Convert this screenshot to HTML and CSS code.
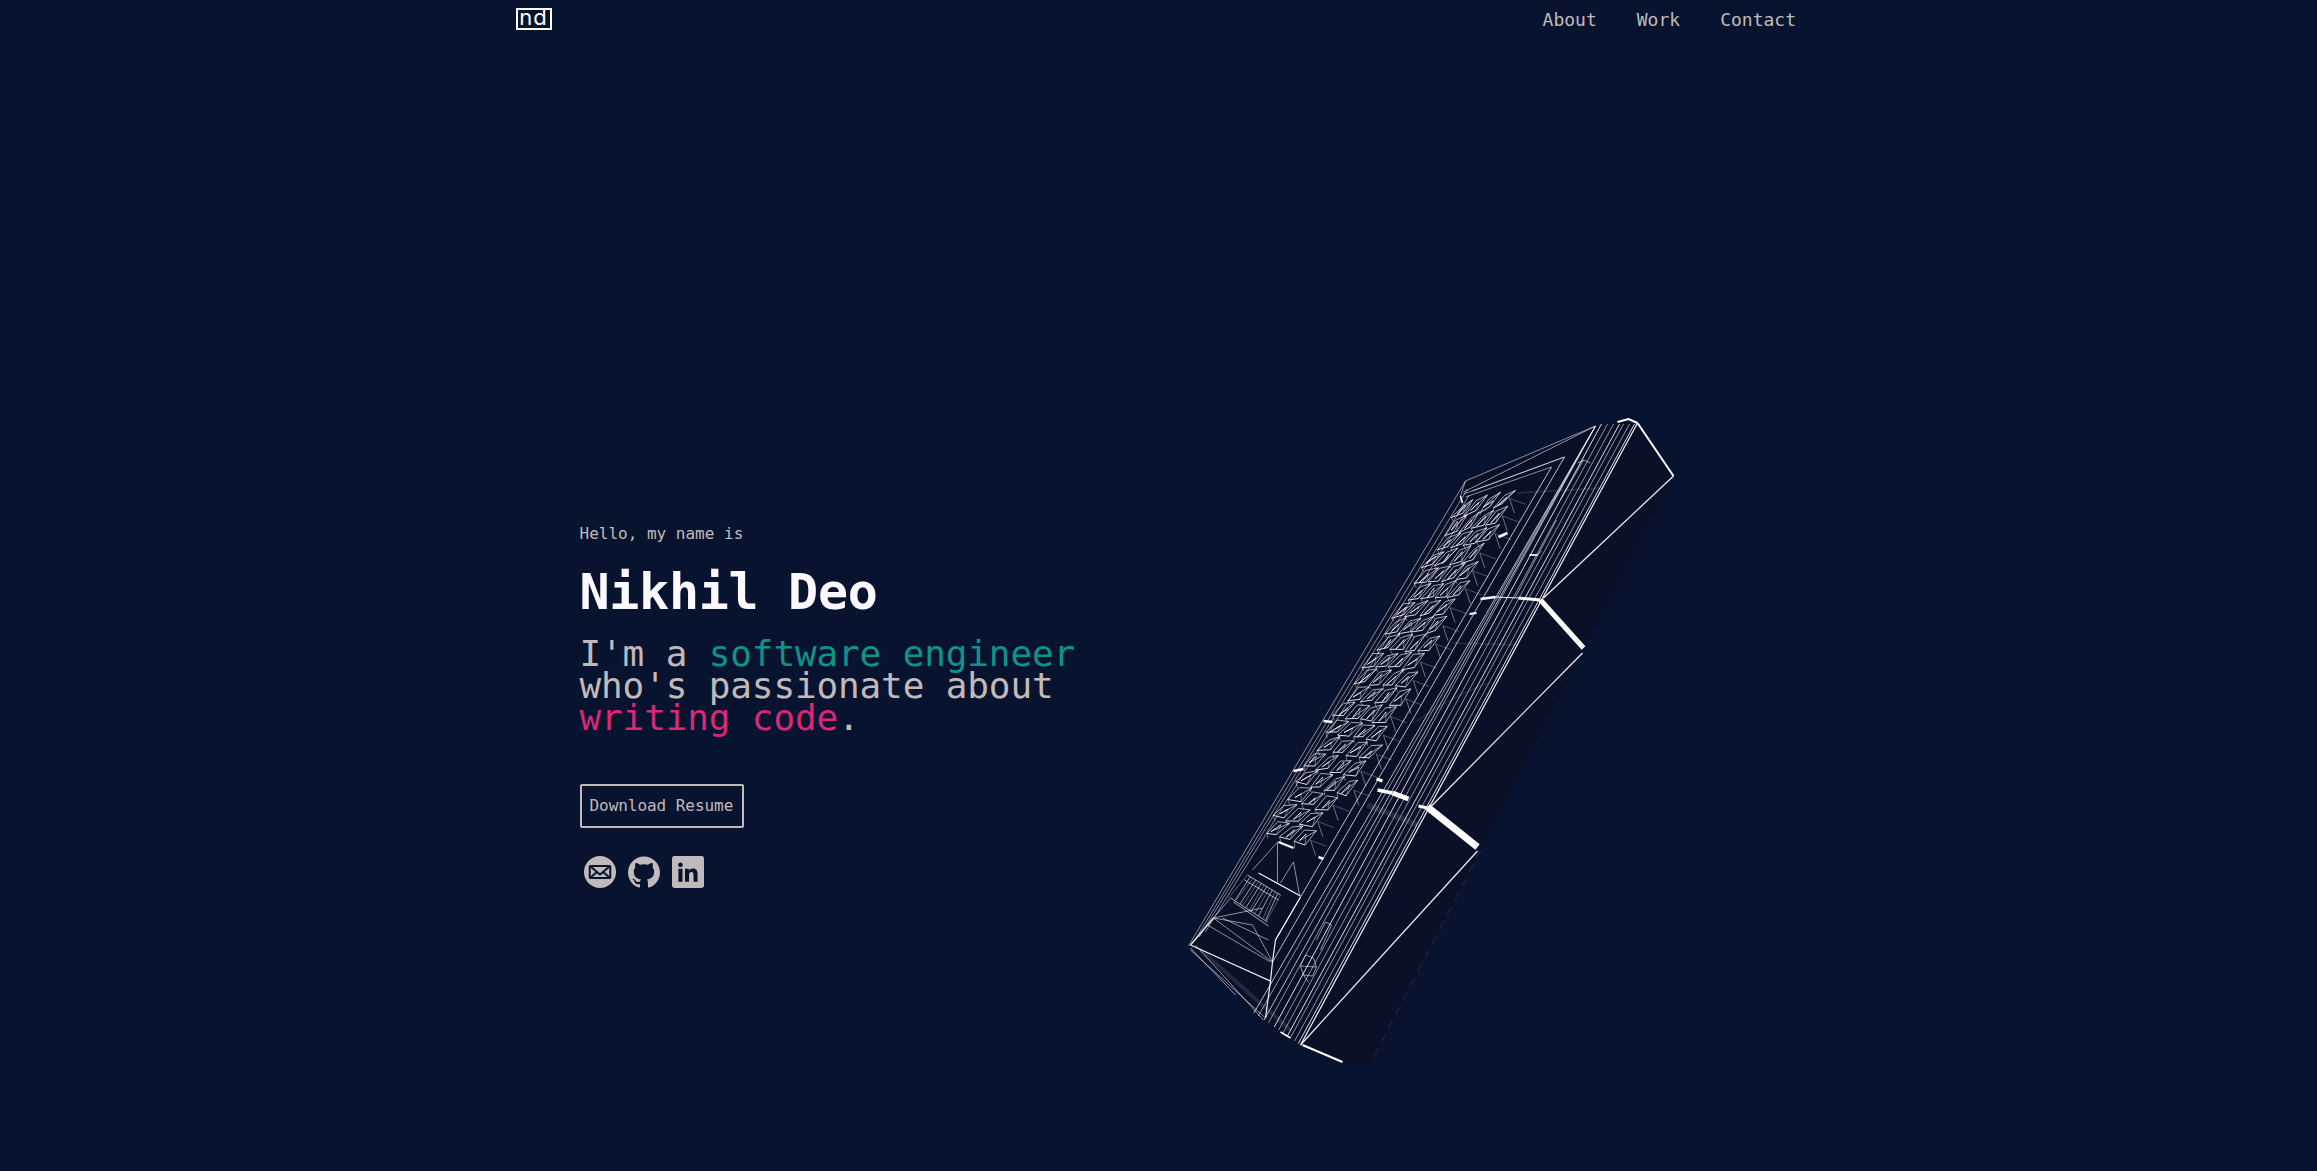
FILE: index.html
```html
<!DOCTYPE html>
<html lang="en">
<head>
  <meta charset="UTF-8">
  <meta name="viewport" content="width=device-width, initial-scale=1.0">
  <title>Nikhil Deo</title>
  <link rel="stylesheet" href="styles.css">
</head>
<body>
  <header class="site-header">
    <a class="logo" href="#">nd</a>
    <nav class="site-nav">
      <a href="#about">About</a>
      <a href="#work">Work</a>
      <a href="#contact">Contact</a>
    </nav>
  </header>

  <main class="hero">
    <section class="intro">
      <p class="hello">Hello, my name is</p>
      <h1 class="name">Nikhil Deo</h1>
      <p class="tagline">I'm a <span class="teal">software engineer</span><br>who's passionate about<br><span class="pink">writing code</span>.</p>
      <a class="resume-btn" href="#">Download Resume</a>
      <div class="socials">
        <a href="#" aria-label="Email">
          <svg viewBox="0 0 32 32">
            <circle class="icon-fill" cx="16" cy="16" r="16"/>
            <path class="mail-lines" d="M6.500 10h19a.8.8 0 0 1 .8.8v10.400a.8.8 0 0 1-.8.8h-19a.8.8 0 0 1-.8-.8V10.800a.8.8 0 0 1 .8-.8zM6.500 10.500 16 18.500 25.500 10.500M6.500 21.500l6.500-5.500M25.500 21.500 19 16"/>
          </svg>
        </a>
        <a href="#" aria-label="GitHub">
          <svg viewBox="0 0 24 24">
            <path class="icon-fill" d="M12 .297c-6.630 0-12 5.373-12 12 0 5.303 3.438 9.800 8.205 11.385.6.113.82-.258.82-.577 0-.285-.01-1.040-.015-2.040-3.338.724-4.042-1.610-4.042-1.610C4.422 18.070 3.633 17.700 3.633 17.700c-1.087-.744.084-.729.084-.729 1.205.084 1.838 1.236 1.838 1.236 1.070 1.835 2.809 1.305 3.495.998.108-.776.417-1.305.76-1.605-2.665-.3-5.466-1.332-5.466-5.930 0-1.310.465-2.380 1.235-3.220-.135-.303-.54-1.523.105-3.176 0 0 1.005-.322 3.300 1.230.96-.267 1.980-.399 3-.405 1.020.006 2.040.138 3 .405 2.280-1.552 3.285-1.230 3.285-1.230.645 1.653.24 2.873.12 3.176.765.84 1.230 1.910 1.230 3.220 0 4.610-2.805 5.625-5.475 5.920.42.36.81 1.096.81 2.220 0 1.606-.015 2.896-.015 3.286 0 .315.21.69.825.57C20.565 22.092 24 17.592 24 12.297c0-6.627-5.373-12-12-12"/>
          </svg>
        </a>
        <a href="#" aria-label="LinkedIn">
          <svg viewBox="0 0 24 24">
            <rect class="icon-fill" width="24" height="24" rx="1.800"/>
            <path class="icon-cut" transform="translate(1.800 2) scale(.85)" d="M20.447 20.452h-3.554v-5.569c0-1.328-.027-3.037-1.852-3.037-1.853 0-2.136 1.445-2.136 2.939v5.667H9.351V9h3.414v1.561h.046c.477-.9 1.637-1.850 3.370-1.850 3.601 0 4.267 2.370 4.267 5.455v6.286zM5.337 7.433c-1.144 0-2.063-.926-2.063-2.065 0-1.138.92-2.063 2.063-2.063 1.140 0 2.064.925 2.064 2.063 0 1.139-.925 2.065-2.064 2.065zm1.782 13.019H3.555V9h3.564v11.452z"/>
          </svg>
        </a>
      </div>
    </section>

    <div class="model-wrap">
      <!-- wireframe keyboard, viewBox is in page coordinates -->
      <svg class="model" viewBox="1158.5 400 642 663">
        <polygon class="body" points="1595,426 1617,422 1628,419 1637,423 1673,476 1370,1063 1342,1063 1300,1047 1278,1033 1263,1020 1188,946 1465,481"/>

        <g class="faint">
          <path d="M1517 493 1603 488" stroke-width="2"/>
          <path d="M1452 643 1517 645" stroke-width="2"/>
          <path d="M1367 805 1417 825" stroke-width="6"/>
          <path d="M1413 723Q1450 697 1487 683" stroke-width="1.500"/>
          <path d="M1200 950 1290 1030" stroke-width="4"/>
        </g>

        <g id="keys" class="thin"></g>
        <g id="bundles" class="thin"></g>

        <g class="thin">
          <path d="M1595 426 1465 481 1188 946"/>
          <path d="M1595 426 1463 492M1564 457 1463 494M1564 457 1472 491M1551 467 1465 497"/>
          <path d="M1465 481 1460 496"/>
          <path d="M1577 463 1583 460 1590 463M1583 460 1560 500"/>
          <path d="M1515 597 1556 520M1529 555 1537 555 1541 551"/>
          <path d="M1207 925 1270 962M1213 918 1272 962M1252 925 1272 962M1213 918 1252 925M1222 918 1268 940"/>
          <path d="M1195 945 1263 1020M1190 948 1235 995"/>
          <path d="M1213 918 1262 908M1230 898 1213 918"/>
          <path d="M1300 966 1305 955 1313 958 1316 967 1312 976 1303 975ZM1300 966 1316 967M1303 975 1308 982"/>
          <path d="M1325 922 1331 925 1320 950M1325 922 1316 940"/>
          <path d="M1252 870 1277 842 1277 882M1293 862 1299 895M1293 862 1280 883M1190 950 1265 1018"/>
        </g>

        <g class="bright">
          <path d="M1637 423 1300 1045"/>
          <path d="M1673 476 1543 598"/>
          <path d="M1582 653 1430 807"/>
          <path d="M1477 851 1300 1045"/>
          <path d="M1495 597 1518 598"/>
          <path d="M1190 945 1213 918M1190 945 1270 981 1272 962 1275 940 1300 897"/>
          <path d="M1270 981 1265 1018"/>
          <path d="M1258 873 1300 896"/>
        </g>

        <g class="solid">
          <path d="M1617 422 1628 419 1637 423" stroke-width="2"/>
          <path d="M1637 423 1673 476" stroke-width="2"/>
          <path d="M1540 600 1583 648" stroke-width="5"/>
          <path d="M1518 598 1540 600" stroke-width="3"/>
          <path d="M1480 599 1495 597" stroke-width="2.500"/>
          <path d="M1427 807 1477 847" stroke-width="7"/>
          <path d="M1418 806 1427 808" stroke-width="3"/>
          <path d="M1377 790 1392 793" stroke-width="3.500"/>
          <path d="M1392 793 1408 799" stroke-width="5"/>
          <path d="M1376 779 1382 781" stroke-width="3"/>
          <path d="M1498 537 1507 533" stroke-width="2.500"/>
          <path d="M1529 555 1537 555" stroke-width="1.500"/>
          <path d="M1469 614 1476 613" stroke-width="2"/>
          <path d="M1323 721 1332 722" stroke-width="2.500"/>
          <path d="M1293 771 1303 769" stroke-width="2.500"/>
          <path d="M1318 857 1323 859" stroke-width="2.500"/>
          <path d="M1278 842 1293 848" stroke-width="2"/>
          <path d="M1460 496 1462 503" stroke-width="1.500"/>
          <path d="M1280 1032 1290 1038" stroke-width="1.500"/>
          <path d="M1302 1045 1342 1062" stroke-width="2"/>
        </g>

        <path class="edge" d="M1480 850 1370 1063"/>
      </svg>
    </div>
  </main>

  <script src="script.js"></script>
</body>
</html>
```

FILE: styles.css
```css
* {
  box-sizing: border-box;
}

body {
  margin: 0;
  min-height: 1171px;
  background-color: #08142f;
  color: #c2baba;
  font-family: "DejaVu Sans Mono", "Liberation Mono", monospace;
  overflow: hidden;
}

a {
  color: inherit;
  text-decoration: none;
}

.site-header {
  width: 1284px;
  height: 40px;
  margin: 0 auto;
  padding: 8px 4.5px 0 0;
  display: flex;
  justify-content: space-between;
  align-items: flex-start;
}

.logo {
  width: 36px;
  height: 22px;
  margin-left: -1px;
  border: 2px solid #fff;
  color: #fff;
  font-family: Inter, "Noto Sans", sans-serif;
  font-size: 22px;
  font-weight: 400;
  line-height: 15px;
  letter-spacing: 1px;
  text-align: center;
}

.site-nav {
  display: flex;
  gap: 40px;
  font-size: 18px;
  line-height: 24px;
}

.hero {
  width: 1284px;
  margin: 360px auto 0;
  display: grid;
  grid-template-columns: 1fr 1fr;
}

.intro {
  padding: 122px 0 0 63px;
}

.hello {
  margin: 0;
  font-size: 16px;
  line-height: 24px;
}

.name {
  margin: 17.5px 0 0;
  color: #fbf8ff;
  font-size: 50px;
  font-weight: 700;
  line-height: 56px;
  letter-spacing: -0.3px;
}

.tagline {
  margin: 18.5px 0 0;
  font-size: 36px;
  line-height: 32px;
  letter-spacing: -0.13px;
}

.teal {
  color: #0d9488;
}

.pink {
  color: #db2777;
}

.resume-btn {
  display: inline-block;
  width: 164px;
  margin-top: 50px;
  padding: 8px;
  border: 2px solid #c2baba;
  border-radius: 2px;
  font-size: 16px;
  line-height: 24px;
  letter-spacing: -0.05px;
  white-space: nowrap;
}

.socials {
  display: flex;
  gap: 4px;
  margin-top: 23.5px;
}

.socials a {
  display: block;
  width: 40px;
  height: 40px;
  padding: 4px;
}

.socials svg {
  display: block;
  width: 32px;
  height: 32px;
}

.icon-fill {
  fill: #c2baba;
}

.icon-cut {
  fill: #08142f;
}

.mail-lines {
  fill: none;
  stroke: #08142f;
  stroke-width: 2;
  stroke-linejoin: round;
}

.model {
  display: block;
  width: 642px;
  height: 663px;
  overflow: hidden;
}

.model path {
  fill: none;
}

.body {
  fill: #0b1029;
}

.faint path {
  stroke: #fff;
  stroke-opacity: 0.1;
}

.thin path {
  stroke: #fff;
  stroke-width: 0.9;
  stroke-opacity: 0.6;
}

.bright path {
  stroke: #fff;
  stroke-width: 1.2;
  stroke-opacity: 0.95;
}

.solid path {
  stroke: #fff;
}

.edge {
  stroke: #fff;
  stroke-width: 0.6;
  stroke-opacity: 0.18;
  stroke-dasharray: 9 7;
}
```

FILE: script.js
```js
// builds the repeating parts of the wireframe: keys and the long edge lines
const NS = 'http://www.w3.org/2000/svg';
const keysGroup = document.getElementById('keys');
const bundlesGroup = document.getElementById('bundles');

function addPath(group, d, opacity) {
  const path = document.createElementNS(NS, 'path');
  path.setAttribute('d', d);
  if (opacity) path.style.strokeOpacity = opacity;
  group.appendChild(path);
}

function wobble(seed) {
  const n = Math.sin(seed * 12.9898) * 43758.5453;
  return (n - Math.floor(n)) * 2 - 1;
}

function line(a, b) {
  return `M${a[0].toFixed(1)} ${a[1].toFixed(1)} ${b[0].toFixed(1)} ${b[1].toFixed(1)}`;
}

// main key block, rows run down the board and tilt as they go
const ROWS = 20;
const COLS = 4;

function keyPoint(r, c) {
  const tilt = -3.5 + (8.5 * r) / ROWS;
  return [1459 - 9.9 * r + 13.5 * c, 505 + 16.5 * r + tilt * c];
}

function jitter(p, seed) {
  return [p[0] + wobble(seed) * 1.4, p[1] + wobble(seed + 0.5) * 1.4];
}

for (let r = 0; r < ROWS; r++) {
  const cols = r > 16 ? 3 : COLS;
  const shift = (r % 3) * 0.2;
  for (let c = 0; c < cols; c++) {
    const s = r * 7 + c * 3 + 1;
    const x = c + shift;
    const a = jitter(keyPoint(r + 0.05, x + 0.3), s);
    const b = jitter(keyPoint(r - 0.1, x + 1), s + 1);
    const d = jitter(keyPoint(r + 0.7, x + 0.75), s + 2);
    const e = jitter(keyPoint(r + 0.8, x), s + 3);
    const i1 = jitter(keyPoint(r + 0.2, x + 0.6), s + 4);
    const i2 = jitter(keyPoint(r + 0.65, x + 0.3), s + 5);
    addPath(keysGroup, line(a, b) + line(b, d) + line(e, a) + line(i2, b), 0.7);
    addPath(keysGroup, line(d, e) + line(i1, i2), 0.95);
    addPath(keysGroup, line(i1, d) + line(e, keyPoint(r + 1.05, x + 0.3)), 0.45);
  }
  // spikes fanning off the right side of the block
  const edge = keyPoint(r + 0.4, cols + shift);
  addPath(keysGroup, line(edge, [edge[0] + 5, edge[1] + 15]), 0.45);
  addPath(keysGroup, line(edge, [edge[0] + 16, edge[1] + 6]), 0.3);
}

// function row near the bottom end
for (let i = 0; i < 13; i++) {
  const t = i / 12;
  const top = [1247 + 33 * t, 875 + 20 * t];
  const bottom = [1230 + 37 * t + wobble(i) * 2, 898 + 24 * t];
  addPath(keysGroup, line(top, bottom), i % 2 ? 0.65 : 0.35);
}
addPath(keysGroup, 'M1247 875 1280 895M1244 880 1278 900M1230 898 1267 922M1233 902 1268 926', 0.7);

// left edge, outside the keys
[5, 9, 14].forEach(off => {
  addPath(bundlesGroup, `M${1465 + off * 0.4} ${481 + off * 1.6} ${1188 + off * 1.2} ${946 - off}`, 0.55);
});

// long lines right of the keys
addPath(bundlesGroup, 'M1551 467 1275 940', 0.8);
addPath(bundlesGroup, 'M1564 457 1272 962', 0.8);

// x on the inner panel line at a given y, the other lines run beside it
function panelX(y) {
  return 1637 - 0.5418 * (y - 423);
}

// straight from the cap down to the bottom edge
[3, 8, 14, 18, 24, 30, 36].forEach((off, i) => {
  const endY = 1045 - off * 0.5;
  addPath(bundlesGroup, `M${1637 - off} 424 ${panelX(endY) - off} ${endY}`, i % 3 === 0 ? 0.95 : 0.6);
});

// fanned out from the apex
[44, 50, 58, 64].forEach((off, i) => {
  const endY = 1045 - off * 0.5;
  addPath(bundlesGroup, `M1595 426 ${panelX(endY) - off} ${endY}`, i % 2 ? 0.8 : 0.6);
});
```
